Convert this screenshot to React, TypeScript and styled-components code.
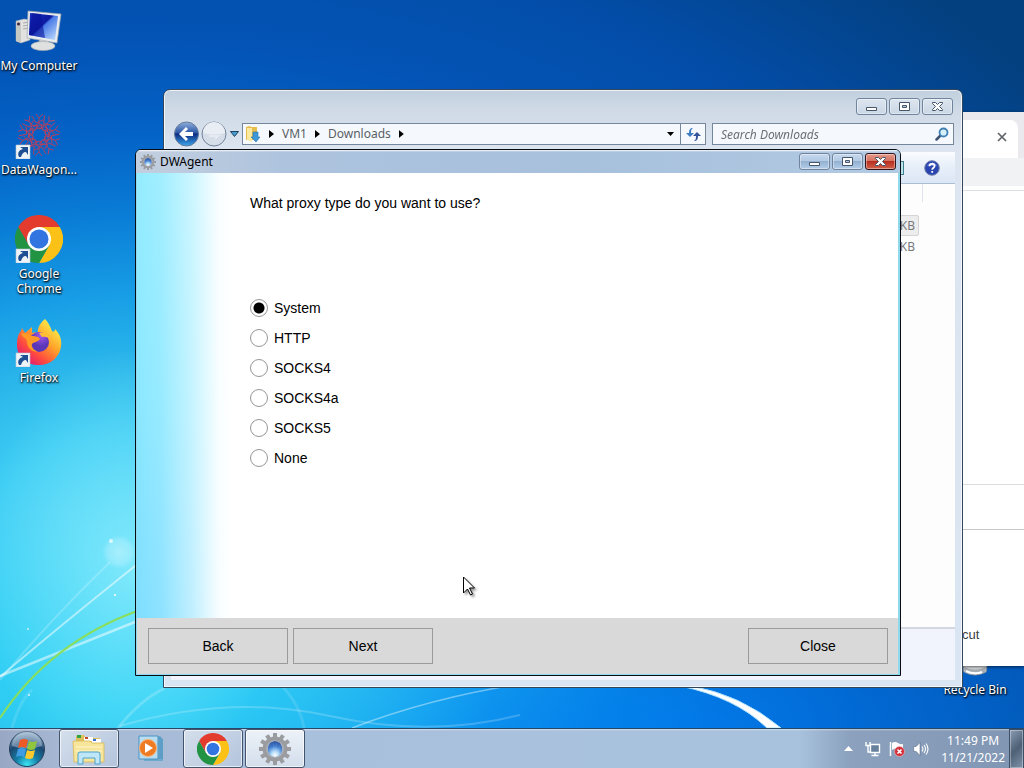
import React, { useState } from 'react';
import styled, { createGlobalStyle, css } from 'styled-components';

const GlobalStyle = createGlobalStyle`
  * {
    box-sizing: border-box;
  }

  body {
    margin: 0;
    font-family: "Noto Sans", "Open Sans", sans-serif;
    font-size: 12px;
  }

  button,
  input {
    font: inherit;
    color: inherit;
    margin: 0;
    padding: 0;
  }
`;

/* desktop */

const Screen = styled.div`
  display: flex;
  flex-direction: column;
  height: 100vh;
  overflow: hidden;
`;

const Workspace = styled.main`
  position: relative;
  flex: 1;
  overflow: hidden;
  background:
    radial-gradient(ellipse 15% 30% at 13% 78%, rgba(160, 242, 255, 0.6), transparent),
    radial-gradient(ellipse 36% 26% at 12% 96%, rgba(40, 210, 245, 0.8), transparent),
    radial-gradient(ellipse 60% 24% at 66% 100%, rgba(0, 136, 255, 0.6), transparent),
    radial-gradient(ellipse 100% 100% at 14% 78%, #58dcf8 0%, #3dcdf4 18%, #30bcec 26%, #189fe6 37%, #0879d4 50%, #0462c6 60%, #0354b6 72%, #034da8 88%, #03407f 110%);
`;

const Wallpaper = styled.svg`
  position: absolute;
  inset: 0;
  width: 100%;
  height: 100%;
`;

const IconColumn = styled.div`
  position: absolute;
  top: 7px;
  left: 0;
  display: grid;
  grid-auto-rows: 104px;
`;

const Shortcut = styled.button`
  display: flex;
  flex-direction: column;
  align-items: center;
  justify-content: flex-start;
  gap: 3px;
  width: 78px;
  border: 0;
  background: none;
  color: #fff;
  line-height: 15px;
  text-shadow: 1px 1px 2px #000, 0 1px 2px rgba(0, 0, 0, 0.8);

  svg {
    flex: none;
  }
`;

const RecycleShortcut = styled(Shortcut)`
  position: absolute;
  right: 10px;
  bottom: 31px;
`;

/* windows */

const windowFrame = css`
  position: absolute;
  display: flex;
  flex-direction: column;
`;

const BrowserWindow = styled.section`
  ${windowFrame};
  top: 112px;
  right: 0;
  bottom: 62px;
  width: 70px;
  background: #fff;
  color: #3c4043;
  box-shadow: 0 1px 3px rgba(0, 0, 0, 0.6);
`;

const TabStrip = styled.div`
  display: flex;
  height: 46px;
  padding: 8px 6px 0 0;
  background: #e9e9ee;
`;

const Tab = styled.div`
  display: flex;
  flex: 1;
  align-items: center;
  justify-content: flex-end;
  padding: 0 8px 4px 0;
  border-radius: 0 8px 0 0;
  background: #fff;
`;

const TabClose = styled.button`
  display: flex;
  border: 0;
  background: none;
`;

const BrowserToolbar = styled.div`
  height: 28px;
  background: #f1f2f4;
`;

const BrowserPage = styled.div`
  display: flex;
  flex: 1;
  flex-direction: column;
  margin-top: 4px;
  border-top: 1px solid #dcdee3;
`;

const PageBlock = styled.div`
  height: 293px;
`;

const PageCard = styled.div`
  height: 46px;
  border-top: 1px solid #dcdce0;
  border-bottom: 1px solid #c8c8cc;
`;

const PageText = styled.p`
  margin: auto 0 22px;
  padding-left: 8px;
  font: 13px/18px "Liberation Sans", Arial, sans-serif;
`;

const ExplorerWindow = styled.section`
  ${windowFrame};
  top: 89px;
  right: 61px;
  bottom: 40px;
  left: 163px;
  padding: 0 7px 7px;
  border: 1px solid #33475c;
  border-radius: 7px 7px 0 0;
  background: linear-gradient(#c1cfde 0, #cfdae6 20px, #dce5f0 60px, #dae5f3 100%);
  box-shadow: inset 0 0 0 1px rgba(255, 255, 255, 0.7);
  color: #5a5f66;
`;

const ExplorerCaption = styled.div`
  display: flex;
  justify-content: flex-end;
  padding: 8px 2px 0 0;
  height: 32px;
`;

const CaptionButtons = styled.div`
  display: flex;
  gap: 2px;
`;

const CaptionButton = styled.button<{ $variant?: 'plain' | 'active' | 'danger' }>`
  display: flex;
  align-items: center;
  justify-content: center;
  width: 31px;
  height: 17px;
  border: 1px solid ${({ $variant }) => ($variant === 'danger' ? '#33131a' : '#70849e')};
  border-radius: 3px;
  background: ${({ $variant }) =>
    $variant === 'danger'
      ? 'linear-gradient(#e59a8c 0, #d4705f 48%, #b92f1f 50%, #d0604a 100%)'
      : $variant === 'active'
        ? 'linear-gradient(#c5d8ed 0, #b3cae4 48%, #94b1d2 50%, #b4cee8 100%)'
        : 'linear-gradient(#dce5ef, #cbd7e5)'};
  box-shadow: inset 0 0 0 1px rgba(255, 255, 255, 0.4);
`;

const NavRow = styled.div`
  display: flex;
  align-items: center;
  height: 24px;
  padding: 0 1px 0 2px;
`;

const NavButtons = styled.div`
  display: flex;
  align-items: center;
  width: 69px;

  button {
    display: flex;
    border: 0;
    background: none;
  }
`;

const AddressBar = styled.div`
  display: flex;
  flex: 1;
  align-items: center;
  height: 22px;
  border: 1px solid #74879c;
  background: #f5f9fd;
`;

const Crumb = styled.button`
  display: flex;
  align-items: center;
  border: 0;
  background: none;
  line-height: 18px;
`;

const CrumbArrow = styled.span`
  width: 5px;
  height: 8px;
  margin: 0 8px;
  background: #000;
  clip-path: polygon(0 0, 100% 50%, 0 100%);
`;

const HistoryButton = styled.button`
  display: flex;
  align-items: center;
  justify-content: center;
  width: 20px;
  height: 20px;
  margin-left: auto;
  border: 0;
  background: none;
`;

const RefreshButton = styled.button`
  display: flex;
  align-items: center;
  justify-content: center;
  width: 25px;
  height: 20px;
  border: 0;
  border-left: 1px solid #74879c;
  background: none;
`;

const SearchBox = styled.label`
  display: flex;
  align-items: center;
  width: 242px;
  height: 22px;
  margin-left: 6px;
  padding: 0 4px 0 8px;
  border: 1px solid #74879c;
  background: #f5f9fd;

  input {
    flex: 1;
    min-width: 0;
    border: 0;
    outline: 0;
    background: none;
    font-style: italic;
  }

  input::placeholder {
    color: #6b6f75;
    opacity: 1;
  }
`;

const ExplorerToolbar = styled.div`
  display: flex;
  align-items: center;
  justify-content: flex-end;
  height: 32px;
  margin-top: 6px;
  padding-right: 15px;
  gap: 20px;
  border-bottom: 1px solid #a9bdd5;
  background: linear-gradient(#fafcfe, #e6eef9 50%, #dce7f5);

  button {
    display: flex;
    border: 0;
    background: none;
  }
`;

const PreviewToggle = styled.span`
  width: 12px;
  height: 14px;
  border: 1px solid #3f7f90;
  background: #b9e4ea;
`;

const FileArea = styled.div`
  display: flex;
  flex: 1;
  justify-content: flex-end;
  background: #fdfdfe;
`;

const SizeColumn = styled.div`
  width: 70px;
  margin-right: 32px;
  padding-top: 31px;
  background: linear-gradient(#dfe4ec, #dfe4ec) top right / 1px 18px no-repeat;
  color: #77797c;
`;

const SizeCell = styled.div<{ $selected?: boolean }>`
  height: 21px;
  margin-right: 4px;
  padding-right: 3px;
  border: 1px solid ${({ $selected }) => ($selected ? '#d4d4d4' : 'transparent')};
  border-radius: 2px;
  background: ${({ $selected }) => ($selected ? '#ededed' : 'none')};
  line-height: 19px;
  text-align: right;
`;

const DetailsPane = styled.div`
  height: 53px;
  border-top: 2px solid #d3d8e0;
  background: #f1f4fc;
`;

const DialogWindow = styled.section`
  ${windowFrame};
  top: 149px;
  right: 123px;
  bottom: 52px;
  left: 135px;
  overflow: hidden;
  padding: 0 2px 1px 1px;
  border: 1px solid #0a0e14;
  border-radius: 6px 6px 0 0;
  background: #8fd9ec;
  color: #000;
`;

const DialogTitle = styled.header`
  display: flex;
  align-items: center;
  height: 23px;
  margin: 0 -2px 0 -1px;
  padding: 0 4px;
  background: linear-gradient(rgba(255, 255, 255, 0.9) 0, rgba(255, 255, 255, 0) 2px),
    linear-gradient(90deg, #c3cfdf 0, #adc3de 20%, #a7c0dc 60%, #b2cae2 100%);

  h1 {
    flex: 1;
    margin: 0 0 0 4px;
    font-size: 12px;
    font-weight: 400;
    line-height: 18px;
  }
`;

const DialogBody = styled.div`
  flex: 1;
  padding: 21px 20px 0 113px;
  background:
    linear-gradient(90deg, rgba(255, 255, 255, 0) 0, rgba(255, 255, 255, 0.12) 24px, rgba(255, 255, 255, 0.5) 54px, rgba(255, 255, 255, 0.95) 82px, #fff 96px),
    linear-gradient(#94ecff, #8ae8ff 50%, #7edeff);
  font: 14px/18px "Liberation Sans", Arial, sans-serif;
`;

const ProxyOptions = styled.fieldset`
  display: grid;
  gap: 12px;
  margin: 0;
  padding: 0;
  border: 0;

  legend {
    margin-bottom: 87px;
    padding: 0;
  }
`;

const Option = styled.label`
  display: flex;
  align-items: center;
  gap: 6px;
  height: 18px;
`;

const Radio = styled.input`
  appearance: none;
  width: 18px;
  height: 18px;
  border: 1px solid #969696;
  border-radius: 50%;
  background: #fff;

  &:checked {
    background: radial-gradient(circle, #000 5px, #fff 6px);
  }
`;

const DialogFooter = styled.footer`
  display: flex;
  align-items: center;
  gap: 5px;
  height: 56px;
  padding: 0 10px 0 11px;
  background: #d9d9d9;
`;

const DialogButton = styled.button<{ $last?: boolean }>`
  width: 140px;
  height: 36px;
  margin-left: ${({ $last }) => ($last ? 'auto' : 0)};
  border: 1px solid #9b9b9b;
  background: #d9d9d9;
  font: 14px/18px "Liberation Sans", Arial, sans-serif;
`;

/* taskbar */

const Taskbar = styled.footer`
  display: flex;
  align-items: stretch;
  height: 40px;
  border-top: 1px solid #28486a;
  background:
    linear-gradient(rgba(255, 255, 255, 0.45) 0, rgba(255, 255, 255, 0) 2px),
    linear-gradient(90deg, #98a8c4 0, #a6b8d4 6%, #a9c0dc 30%, #a8c2de 78%, #8ba1bd 83%, #8096b3 100%);
`;

const StartButton = styled.button`
  display: flex;
  align-items: center;
  justify-content: center;
  width: 54px;
  margin-right: 5px;
  border: 0;
  background: none;
`;

const TaskList = styled.nav`
  display: flex;
  flex: 1;
  gap: 2px;
`;

const TaskButton = styled.button<{ $open?: boolean; $active?: boolean }>`
  display: flex;
  align-items: center;
  justify-content: center;
  width: 60px;
  border: 1px solid transparent;
  background: none;

  ${({ $open, $active }) => $open && css`
    border-color: #43546c;
    border-radius: 3px;
    background: ${$active
      ? 'linear-gradient(#edf2f8, #d3deec)'
      : 'linear-gradient(135deg, #d5dfec, #b3c4dc)'};
    box-shadow: inset 0 0 0 1px rgba(255, 255, 255, 0.65);
  `}
`;

const Tray = styled.div`
  display: flex;
  align-items: center;
  gap: 8px;
  margin-right: 4px;

  > button {
    display: flex;
    border: 0;
    background: none;
  }

  > button:first-child {
    margin-right: 4px;
  }
`;

const Clock = styled.time`
  margin-left: 4px;
  color: #fff;
  line-height: 17px;
  text-align: center;
  white-space: nowrap;
`;

const ShowDesktop = styled.button`
  width: 15px;
  border: 1px solid #3c4f66;
  border-bottom: 0;
  background: linear-gradient(135deg, #8b9db4, #4d6075 50%, #8193aa);
  box-shadow: inset 0 0 0 1px rgba(255, 255, 255, 0.35);
`;

const Cursor = styled.svg`
  position: absolute;
  top: 576px;
  left: 462px;
  filter: drop-shadow(2px 2px 1px rgba(0, 0, 0, 0.4));
`;

/* drawings */

const LinkBadge = () => (
  <g>
    <path d="M1 34h14v14H1z" fill="#eef3f8" stroke="#b9c6d4" strokeWidth=".6" />
    <path d="M4 46c-2-4 0-7 4-8l-3-2h8v8l-2-3c-3 0-4 2-5 5z" fill="#1f4f93" />
  </g>
);

const ComputerIcon = () => (
  <svg width="48" height="48" viewBox="0 -3 48 48">
    <defs>
      <linearGradient id="pcScreen" x1="0" y1="0" x2="1" y2="1">
        <stop offset="0" stopColor="#1733c0" />
        <stop offset=".45" stopColor="#0c18a0" />
        <stop offset=".5" stopColor="#4a7be8" />
        <stop offset="1" stopColor="#c9e4ff" />
      </linearGradient>
    </defs>
    <path d="M1 11l8-2 6 1v20l-9 3-5-2z" fill="#e2e3e1" stroke="#aaa" strokeWidth=".5" />
    <path d="M1 11l5 1v21l-5-2z" fill="#c6c8c4" />
    <circle cx="3.500" cy="14" r="1.500" fill="#424" />
    <path d="M8 13l6-1M8 16l6-1M8 19l6-1" stroke="#aaa" />
    <path d="M13 1l33 3-4 29-30-5z" fill="#e9ecee" stroke="#9ba3ad" strokeWidth=".7" />
    <path d="M15 3l28 3-3 24-26-5z" fill="url(#pcScreen)" />
    <path d="M17 3l9 1 4 24-16-3z" fill="#0a1399" opacity=".6" />
    <path d="M24 29l9 2v4h-8z" fill="#c6c9cc" />
    <ellipse cx="28" cy="36" rx="12" ry="4.500" fill="#dfe1e0" stroke="#a9adaf" strokeWidth=".6" />
  </svg>
);

const DataWagonIcon = () => (
  <svg width="48" height="48" viewBox="0 0 48 48">
    <g fill="none" stroke="#b8405e" strokeWidth=".9">
      {[0, 36, 72, 108, 144, 180, 216, 252, 288, 324].map((a) => (
        <g key={a} transform={`rotate(${a} 24 24)`}>
          <path d="M21 3l3 4 4-4M24 7v5l-6 4M17 5l4 7 7-3M24 12l5 4M20 15l4 3 5-2" />
        </g>
      ))}
      <circle cx="24" cy="24" r="7" stroke="#c23c52" strokeDasharray="3 1" />
    </g>
    <LinkBadge />
  </svg>
);

interface ChromeProps {
  size: number;
  badge?: boolean;
}

const ChromeIcon = ({ size, badge }: ChromeProps) => (
  <svg width={size} height={size} viewBox="0 0 48 48">
    <path d="M24 12h20.800A24 24 0 0 0 3.200 12l10.400 18z" fill="#e33b2e" />
    <path d="M34.400 30L24 48A24 24 0 0 0 44.800 12H24z" fill="#fbc116" />
    <path d="M13.600 30L3.200 12A24 24 0 0 0 24 48l10.400-18z" fill="#229342" />
    <circle cx="24" cy="24" r="12" fill="#fff" />
    <circle cx="24" cy="24" r="9.500" fill="#3274e0" />
    {badge && <LinkBadge />}
  </svg>
);

const FirefoxIcon = () => (
  <svg width="48" height="48" viewBox="0 0 48 48">
    <defs>
      <linearGradient id="ffBody" x1=".85" y1=".1" x2=".2" y2=".9">
        <stop offset="0" stopColor="#fff14a" />
        <stop offset=".4" stopColor="#ffa52a" />
        <stop offset=".75" stopColor="#ff4b3e" />
        <stop offset="1" stopColor="#e4206e" />
      </linearGradient>
      <radialGradient id="ffGlobe" cx=".6" cy=".2">
        <stop offset="0" stopColor="#a557e8" />
        <stop offset="1" stopColor="#5b37b8" />
      </radialGradient>
    </defs>
    <path d="M30 0c3 3 5 7 7 12 1 1 3 1 3-2 5 5 7 11 6 18-2 11-11 18-22 18C11 46 2 38 2 26c0-6 1-11 4-14l1-3 3 5 7-6v6c3-1 4 0 6 1-1-6 2-11 7-15z" fill="url(#ffBody)" />
    <circle cx="24" cy="23" r="10" fill="url(#ffGlobe)" />
    <path d="M6 15c4-2 8-1 10 2 3 0 7 0 9 3-2 3-6 3-8 5-1 3 2 6 6 8-6 0-11-4-11-10 0-4-4-4-6-8z" fill="#ff9a24" />
    <path d="M24 14c5-2 10 1 12 7-3-3-6-4-9-3z" fill="#ffbd35" />
    <LinkBadge />
  </svg>
);

const RecycleIcon = () => (
  <svg width="48" height="48" viewBox="0 0 48 48">
    <path d="M8 5h32l-5 36q-11 6-22 0z" fill="#d9dde0" stroke="#8b939a" />
    <path d="M13 36q11 5 22 0l-1 5q-10 5-20 0z" fill="#a8adb3" />
    <path d="M15 40q8 4 16 1" stroke="#fff" strokeWidth="2" fill="none" />
  </svg>
);

const GearIcon = ({ size }: { size: number }) => (
  <svg width={size} height={size} viewBox="0 0 32 32">
    <defs>
      <radialGradient id="gearCore" cx=".5" cy=".9" r=".85">
        <stop offset="0" stopColor="#fff" />
        <stop offset=".3" stopColor="#b6dcf8" />
        <stop offset=".65" stopColor="#4f8cda" />
        <stop offset="1" stopColor="#2f58a4" />
      </radialGradient>
    </defs>
    <g fill="#9a9c9f">
      {[0, 30, 60, 90, 120, 150].map((a) => (
        <path key={a} d="M14 0h4v32h-4z" transform={`rotate(${a} 16 16)`} />
      ))}
      <circle cx="16" cy="16" r="12.500" />
    </g>
    <circle cx="16" cy="16" r="9" fill="#a9afb9" />
    <path d="M9 14l2-4 2-1 3-1 3 1 2 1 2 4q1 9-7 10-8-1-7-10z" fill="url(#gearCore)" />
    <path d="M13 11v4M16 9v5M19 11v4" stroke="#2a549f" strokeWidth=".7" opacity=".6" />
  </svg>
);

const StartOrb = () => (
  <svg width="38" height="38" viewBox="0 0 38 38">
    <defs>
      <radialGradient id="orb" cx=".5" cy=".95" r=".9">
        <stop offset="0" stopColor="#3ee6f5" />
        <stop offset=".35" stopColor="#1480a8" />
        <stop offset=".7" stopColor="#1c4770" />
        <stop offset="1" stopColor="#8ba9c4" />
      </radialGradient>
    </defs>
    <circle cx="19" cy="19" r="17.500" fill="url(#orb)" stroke="#263f5c" />
    <path d="M4 16a15 15 0 0 1 30 0q-15 5-30 0z" fill="#d6e4f0" opacity=".4" />
    <path d="M12 10q4-2 8 0l-2 8q-4-2-8 0z" fill="#ee5a25" />
    <path d="M21 11q4 2 8 0l-2 8q-4 2-8 0z" fill="#8fc63d" />
    <path d="M10 19q4-2 8 0l-2 8q-4-2-8 0z" fill="#3f9be2" />
    <path d="M19 20q4 2 8 0l-2 8q-4 2-8 0z" fill="#fdc92c" />
  </svg>
);

const FolderIcon = () => (
  <svg width="34" height="34" viewBox="0 0 34 34">
    <path d="M4 5q0-2 2-2h6l2 3h14v20H4z" fill="#dfc05e" />
    <path d="M5 3h4v3H5z" fill="#2fa244" />
    <path d="M12 5h9v4h-9z" fill="#fff" />
    <path d="M13 5h3v2h-3z" fill="#c0492f" />
    <path d="M20 7h9v4h-9z" fill="#fff" />
    <path d="M21 7h3v2h-3z" fill="#356fd0" />
    <path d="M1 9h17l2 2h12v19H2z" fill="#f6e59a" stroke="#d8b855" strokeWidth=".8" />
    <path d="M4 15h26M4 19h26" stroke="#fff6c8" />
    <path d="M6 32V22q0-2 2-2h18q2 0 2 2v10h-5v-6H11v6z" fill="#bfe6f7" stroke="#4ba3cf" />
  </svg>
);

const MediaIcon = () => (
  <svg width="30" height="28" viewBox="0 0 30 28">
    <path d="M6 1h18l3 3v22H8z" fill="#6fa9cd" />
    <path d="M3 1h19v23H3zM24 2v22M26 4v20" fill="#b8dcf0" stroke="#4c93c2" />
    <circle cx="12" cy="13" r="8.500" fill="#ee7b22" stroke="#fbb172" />
    <path d="M9 8l8 5-8 5z" fill="#fff" />
  </svg>
);

const BackOrb = () => (
  <svg width="27" height="26" viewBox="0 0 27 26">
    <defs>
      <linearGradient id="backOrb" x1="0" y1="0" x2="0" y2="1">
        <stop offset="0" stopColor="#8fb0dc" />
        <stop offset=".45" stopColor="#2c57a6" />
        <stop offset=".5" stopColor="#0c2c80" />
        <stop offset="1" stopColor="#3ca5ec" />
      </linearGradient>
    </defs>
    <circle cx="13.500" cy="13" r="12" fill="url(#backOrb)" stroke="#647a99" />
    <path d="M6 13l7-7 2 2-3 3h8v4h-8l3 3-2 2z" fill="#fff" />
  </svg>
);

const ForwardOrb = () => (
  <svg width="27" height="26" viewBox="0 0 27 26">
    <circle cx="14" cy="13" r="12" fill="#d5dde8" stroke="#73839a" />
    <path d="M3 12a11 11 0 0 1 22 0q-11 3-22 0z" fill="#e9eef4" />
    <path d="M21 14l-6 5v-3H9v-2z" fill="#e6ebf1" />
  </svg>
);

const DownloadsIcon = () => (
  <svg width="18" height="18" viewBox="0 0 18 18">
    <path d="M3 2l4-1 1 1h6v13H3z" fill="#e6bd4d" />
    <path d="M4 3h5v14l-5-2z" fill="#fbe9a0" />
    <path d="M10 7h5v5h2l-4 5-5-5h2z" fill="#3d98d8" stroke="#2a74ad" strokeWidth=".6" />
  </svg>
);

const MinimizeGlyph = () => (
  <svg width="13" height="11" viewBox="0 0 13 11">
    <path d="M1.500 6.500h10v3h-10z" fill="#fff" stroke="#46566b" />
  </svg>
);

const MaximizeGlyph = () => (
  <svg width="13" height="11" viewBox="0 0 13 11">
    <path d="M1.500 1.500h10v8h-10z" fill="#fff" stroke="#46566b" />
    <path d="M4.500 4.500h4v2h-4z" fill="#b8c9dd" stroke="#46566b" />
  </svg>
);

const CloseGlyph = () => (
  <svg width="13" height="11" viewBox="0 0 13 11">
    <path d="M1.500 1.500h3l2 2 2-2h3v1l-3 3 3 3v1h-3l-2-2-2 2h-3v-1l3-3-3-3z" fill="#fff" stroke="#46566b" />
  </svg>
);

const SearchGlyph = () => (
  <svg width="14" height="14" viewBox="0 0 14 14">
    <path d="M1.500 12.500l5-5" stroke="#3f5373" strokeWidth="2.500" strokeLinecap="round" />
    <circle cx="8.500" cy="5.500" r="4" fill="#d5effb" stroke="#3f7fb4" strokeWidth="1.800" />
  </svg>
);

const RefreshGlyph = () => (
  <svg width="15" height="13" viewBox="0 0 15 13">
    <path d="M7 0C4 0 3 2 3 5H0l4 4 4-4H5c0-2 0-4 2-5z" fill="#3d7cc4" />
    <path d="M8 13c3 0 4-2 4-5h3l-4-4-4 4h3c0 2 0 4-2 5z" fill="#35539b" />
  </svg>
);

const HelpGlyph = () => (
  <svg width="16" height="16" viewBox="0 0 16 16">
    <circle cx="8" cy="8" r="7.300" fill="#2b45b0" stroke="#7482ad" />
    <path d="M3 6a5.500 5.500 0 0 1 10 0z" fill="#8ba0e4" opacity=".6" />
    <path d="M5.500 6.200C5.500 3 10.600 3 10.600 6c0 1.800-2.400 1.800-2.400 3.800M8.200 11v1.800" fill="none" stroke="#fff" strokeWidth="1.800" />
  </svg>
);

const NetworkGlyph = () => (
  <svg width="16" height="16" viewBox="0 0 16 16">
    <path d="M5.500 3.500h9v8h-9z" fill="#66809e" stroke="#fff" strokeWidth="1.400" />
    <path d="M10 12v2M6.500 14.500h7" stroke="#fff" strokeWidth="1.400" />
    <path d="M1 1v3.500h4V1M3 4v7h2" fill="none" stroke="#fff" strokeWidth="1.400" />
  </svg>
);

const FlagGlyph = () => (
  <svg width="16" height="16" viewBox="0 0 16 16">
    <path d="M1.500 1v14" stroke="#fff" strokeWidth="1.500" />
    <path d="M3 2q3-2 6 0t5 1v6q-3 1-5-1T3 9z" fill="#fff" />
    <circle cx="10.500" cy="10.500" r="5" fill="#d3303a" stroke="#efc3c6" strokeWidth=".6" />
    <path d="M8.500 8.500l4 4m0-4l-4 4" stroke="#fff" strokeWidth="1.600" />
  </svg>
);

const SpeakerGlyph = () => (
  <svg width="16" height="16" viewBox="0 0 16 16">
    <path d="M.7 5.500h2.500L7 1.500v13l-3.800-4H.7z" fill="#fff" stroke="#4b5f79" strokeWidth=".5" />
    <path d="M9 5.500q1.800 2.500 0 5M11 4q3 4 0 8M13 2.500q4 5.500 0 11" fill="none" stroke="#fff" strokeWidth="1.100" />
  </svg>
);

const WallpaperRays = () => (
  <Wallpaper viewBox="0 0 1024 728" preserveAspectRatio="none">
    <defs>
      <filter id="soft">
        <feGaussianBlur stdDeviation=".7" />
      </filter>
      <radialGradient id="flare">
        <stop offset="0" stopColor="#fff" stopOpacity=".35" />
        <stop offset=".7" stopColor="#fff" stopOpacity=".2" />
        <stop offset="1" stopColor="#fff" stopOpacity="0" />
      </radialGradient>
    </defs>
    <circle cx="119" cy="552" r="17" fill="url(#flare)" />
    <circle cx="111" cy="541" r="2" fill="#fff" opacity=".7" />
    <g fill="#fff">
      <circle cx="115" cy="595" r="1" />
      <circle cx="28" cy="629" r="1" opacity=".7" />
      <circle cx="29" cy="695" r="1" opacity=".8" />
    </g>
    <g fill="none" stroke="#fff" filter="url(#soft)">
      <path d="M0 677Q50 634 140 562" strokeWidth="2" opacity=".5" />
      <path d="M0 680Q50 620 110 562" strokeWidth="2" opacity=".2" />
      <path d="M0 676Q70 648 140 620" strokeWidth="2.500" opacity=".5" />
      <path d="M12 728Q20 700 32 690" strokeWidth="3" opacity=".12" />
      <path d="M118 728Q140 700 165 688" strokeWidth="3" opacity=".2" />
      <path d="M120 726Q230 694 330 716T520 715" strokeWidth="2" opacity=".2" />
      <path d="M280 684Q300 704 304 728" strokeWidth="3" opacity=".12" />
      <path d="M352 728Q430 698 520 684" strokeWidth="1.500" opacity=".4" />
    </g>
    <path d="M0 718Q50 642 140 610" fill="none" stroke="#8ade5c" strokeWidth="2" filter="url(#soft)" />
    <path d="M680 686Q735 697 767 728h14Q740 694 690 686z" fill="#fff" stroke="#aee2ff" />
  </Wallpaper>
);

const PROXY_TYPES = ['System', 'HTTP', 'SOCKS4', 'SOCKS4a', 'SOCKS5', 'None'];

const WindowControls = ({ active }: { active?: boolean }) => (
  <CaptionButtons>
    <CaptionButton $variant={active ? 'active' : 'plain'} aria-label="Minimize"><MinimizeGlyph /></CaptionButton>
    <CaptionButton $variant={active ? 'active' : 'plain'} aria-label="Maximize"><MaximizeGlyph /></CaptionButton>
    <CaptionButton $variant={active ? 'danger' : 'plain'} aria-label="Close window"><CloseGlyph /></CaptionButton>
  </CaptionButtons>
);

const Browser = () => (
  <BrowserWindow>
    <TabStrip>
      <Tab>
        <TabClose aria-label="Close tab">
          <svg width="16" height="16" viewBox="0 0 16 16">
            <path d="M4 4l8 8m0-8l-8 8" stroke="#5f6368" strokeWidth="1.700" />
          </svg>
        </TabClose>
      </Tab>
    </TabStrip>
    <BrowserToolbar />
    <BrowserPage>
      <PageBlock />
      <PageCard />
      <PageText>cut</PageText>
    </BrowserPage>
  </BrowserWindow>
);

const Explorer = () => (
  <ExplorerWindow>
    <ExplorerCaption>
      <WindowControls />
    </ExplorerCaption>
    <NavRow>
      <NavButtons>
        <button aria-label="Back to previous folder"><BackOrb /></button>
        <button aria-label="Forward"><ForwardOrb /></button>
        <button aria-label="Recent pages">
          <svg width="15" height="8" viewBox="0 0 15 8">
            <path d="M3.500 1.500h8l-4 5z" fill="#46a0cf" stroke="#1f3f63" />
          </svg>
        </button>
      </NavButtons>
      <AddressBar>
        <DownloadsIcon />
        <CrumbArrow />
        <Crumb>VM1</Crumb>
        <CrumbArrow />
        <Crumb>Downloads</Crumb>
        <CrumbArrow />
        <HistoryButton aria-label="Previous locations">
          <svg width="7" height="4" viewBox="0 0 7 4"><path d="M0 0h7L3.500 4z" /></svg>
        </HistoryButton>
        <RefreshButton aria-label="Refresh"><RefreshGlyph /></RefreshButton>
      </AddressBar>
      <SearchBox>
        <input placeholder="Search Downloads" aria-label="Search Downloads" />
        <SearchGlyph />
      </SearchBox>
    </NavRow>
    <ExplorerToolbar>
      <PreviewToggle />
      <button aria-label="Help"><HelpGlyph /></button>
    </ExplorerToolbar>
    <FileArea>
      <SizeColumn>
        <SizeCell $selected>KB</SizeCell>
        <SizeCell>KB</SizeCell>
      </SizeColumn>
    </FileArea>
    <DetailsPane />
  </ExplorerWindow>
);

const AgentDialog = () => {
  const [proxy, setProxy] = useState('System');

  return (
    <DialogWindow>
      <DialogTitle>
        <GearIcon size={16} />
        <h1>DWAgent</h1>
        <WindowControls active />
      </DialogTitle>
      <DialogBody>
        <ProxyOptions>
          <legend>What proxy type do you want to use?</legend>
          {PROXY_TYPES.map((type) => (
            <Option key={type}>
              <Radio
                type="radio"
                name="proxy"
                value={type}
                checked={proxy === type}
                onChange={() => setProxy(type)}
              />
              {type}
            </Option>
          ))}
        </ProxyOptions>
      </DialogBody>
      <DialogFooter>
        <DialogButton>Back</DialogButton>
        <DialogButton>Next</DialogButton>
        <DialogButton $last>Close</DialogButton>
      </DialogFooter>
    </DialogWindow>
  );
};

const App = () => (
  <>
    <GlobalStyle />
    <Screen>
      <Workspace>
        <WallpaperRays />
        <IconColumn>
          <Shortcut><ComputerIcon />My Computer</Shortcut>
          <Shortcut><DataWagonIcon />DataWagon...</Shortcut>
          <Shortcut><ChromeIcon size={48} badge />Google Chrome</Shortcut>
          <Shortcut><FirefoxIcon />Firefox</Shortcut>
        </IconColumn>
        <RecycleShortcut><RecycleIcon />Recycle Bin</RecycleShortcut>
        <Browser />
        <Explorer />
        <AgentDialog />
        <Cursor width="14" height="21" viewBox="0 0 14 21">
          <path d="M1.500 1v16l4-4 3 6 2-1-3-6h5z" fill="#fff" stroke="#000" />
        </Cursor>
      </Workspace>
      <Taskbar>
        <StartButton aria-label="Start"><StartOrb /></StartButton>
        <TaskList>
          <TaskButton $open aria-label="Windows Explorer"><FolderIcon /></TaskButton>
          <TaskButton aria-label="Media Player"><MediaIcon /></TaskButton>
          <TaskButton $open aria-label="Google Chrome"><ChromeIcon size={32} /></TaskButton>
          <TaskButton $open $active aria-label="DWAgent"><GearIcon size={32} /></TaskButton>
        </TaskList>
        <Tray>
          <button aria-label="Show hidden icons">
            <svg width="9" height="5" viewBox="0 0 9 5"><path d="M0 5h9L4.500 0z" fill="#fff" /></svg>
          </button>
          <button aria-label="Network"><NetworkGlyph /></button>
          <button aria-label="Action Center"><FlagGlyph /></button>
          <button aria-label="Volume"><SpeakerGlyph /></button>
          <Clock>11:49 PM<br />11/21/2022</Clock>
        </Tray>
        <ShowDesktop aria-label="Show desktop" />
      </Taskbar>
    </Screen>
  </>
);

export default App;
